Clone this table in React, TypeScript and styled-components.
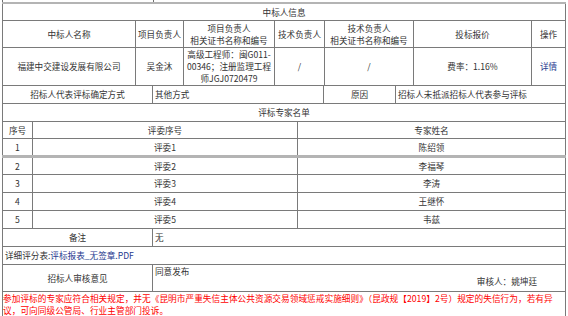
import React from 'react';
import styled, { createGlobalStyle } from 'styled-components';

const GlobalStyle = createGlobalStyle`
  body {
    margin: 0;
    background: #fff;
    font-family: "Noto Sans CJK SC", "Liberation Sans", sans-serif;
  }
`;

const Page = styled.div`
  width: 563px;
  padding-left: 2px;
`;

const TopStrip = styled.div`
  display: flex;
  height: 2px;
  & > span {
    width: 150px;
    border-left: 1px solid #6f6f6f;
    border-right: 1px solid #6f6f6f;
  }
`;

const Table = styled.table`
  width: 563px;
  border-collapse: collapse;
  table-layout: fixed;
  & + & {
    margin-top: -1px;
  }
`;

const Cell = styled.td<{ $align?: 'left' | 'center' | 'right'; $h?: number; $top?: boolean; $sep?: boolean }>`
  border: 1px solid #7a7a7a;
  ${(p) => (p.$top ? 'border-top: 2px solid #b4b4b4;' : '')}
  ${(p) => (p.$sep ? 'border-bottom: 3px solid #b4b4b4;' : '')}
  height: ${(p) => (p.$h ? `${p.$h}px` : 'auto')};
  padding: 0 2px;
  text-align: ${(p) => p.$align || 'center'};
  vertical-align: middle;
  font-size: 8.6px;
  line-height: 12px;
  color: #333;
  box-sizing: border-box;
`;

const Link = styled.a`
  color: #1f3a8f;
  text-decoration: none;
`;

const FileLink = styled(Link)`
  font-family: "Noto Sans CJK SC", "Liberation Mono", monospace;
`;

const OpinionCell = styled(Cell)`
  vertical-align: top;
  padding-top: 0;
`;

const Reviewer = styled.div`
  text-align: right;
  padding-right: 26px;
  margin-top: -2px;
`;

const Notice = styled(Cell)`
  color: #f00;
  font-size: 8.7px;
  padding: 1px 0 0 0;
  vertical-align: top;
  border-bottom: 2px solid #b4b4b4;
`;

const experts = [
  { no: 1, name: '陈绍领' },
  { no: 2, name: '李福琴' },
  { no: 3, name: '李涛' },
  { no: 4, name: '王继怀' },
  { no: 5, name: '韦兹' },
];

export default function App() {
  return (
    <Page>
      <GlobalStyle />
      <TopStrip>
        <span />
      </TopStrip>

      <Table>
        <colgroup>
          <col style={{ width: 133 }} />
          <col style={{ width: 48 }} />
          <col style={{ width: 91 }} />
          <col style={{ width: 50 }} />
          <col style={{ width: 89 }} />
          <col style={{ width: 118 }} />
          <col style={{ width: 34 }} />
        </colgroup>
        <tbody>
          <tr>
            <Cell colSpan={7} $h={17} $top>中标人信息</Cell>
          </tr>
          <tr>
            <Cell $h={27}>中标人名称</Cell>
            <Cell>项目负责人</Cell>
            <Cell>项目负责人<br />相关证书名称和编号</Cell>
            <Cell>技术负责人</Cell>
            <Cell>技术负责人<br />相关证书名称和编号</Cell>
            <Cell>投标报价</Cell>
            <Cell>操作</Cell>
          </tr>
          <tr>
            <Cell $h={38}>福建中交建设发展有限公司</Cell>
            <Cell>吴金沐</Cell>
            <Cell>高级工程师：闽G011-00346；注册监理工程师JGJ0720479</Cell>
            <Cell>/</Cell>
            <Cell>/</Cell>
            <Cell>费率：1.16%</Cell>
            <Cell><Link href="#">详情</Link></Cell>
          </tr>
        </tbody>
      </Table>

      <Table>
        <colgroup>
          <col style={{ width: 150 }} />
          <col style={{ width: 171 }} />
          <col style={{ width: 72 }} />
          <col style={{ width: 170 }} />
        </colgroup>
        <tbody>
          <tr>
            <Cell $h={18}>招标人代表评标确定方式</Cell>
            <Cell $align="left">其他方式</Cell>
            <Cell>原因</Cell>
            <Cell $align="left">招标人未抵派招标人代表参与评标</Cell>
          </tr>
        </tbody>
      </Table>

      <Table>
        <colgroup>
          <col style={{ width: 30 }} />
          <col style={{ width: 265 }} />
          <col style={{ width: 268 }} />
        </colgroup>
        <tbody>
          <tr>
            <Cell colSpan={3} $h={18}>评标专家名单</Cell>
          </tr>
          <tr>
            <Cell $h={17}>序号</Cell>
            <Cell>评委序号</Cell>
            <Cell>专家姓名</Cell>
          </tr>
          {experts.map((e) => (
            <tr key={e.no}>
              <Cell $h={18} $sep={e.no === 1}>{e.no}</Cell>
              <Cell $sep={e.no === 1}>评委{e.no}</Cell>
              <Cell $sep={e.no === 1}>{e.name}</Cell>
            </tr>
          ))}
        </tbody>
      </Table>

      <Table>
        <colgroup>
          <col style={{ width: 150 }} />
          <col style={{ width: 413 }} />
        </colgroup>
        <tbody>
          <tr>
            <Cell $h={18}>备注</Cell>
            <Cell $align="left">无</Cell>
          </tr>
          <tr>
            <Cell colSpan={2} $align="left" $h={18}>
              详细评分表:<FileLink href="#">评标报表_无签章.PDF</FileLink>
            </Cell>
          </tr>
          <tr>
            <Cell $h={27}>招标人审核意见</Cell>
            <OpinionCell $align="left">
              同意发布
              <Reviewer>审核人：姚坤廷</Reviewer>
            </OpinionCell>
          </tr>
          <tr>
            <Notice colSpan={2} $align="left" $h={24}>
              参加评标的专家应符合相关规定，并无《昆明市严重失信主体公共资源交易领域惩戒实施细则》（昆政规【2019】2号）规定的失信行为，若有异议，可向同级公管局、行业主管部门投诉。
            </Notice>
          </tr>
        </tbody>
      </Table>
    </Page>
  );
}
